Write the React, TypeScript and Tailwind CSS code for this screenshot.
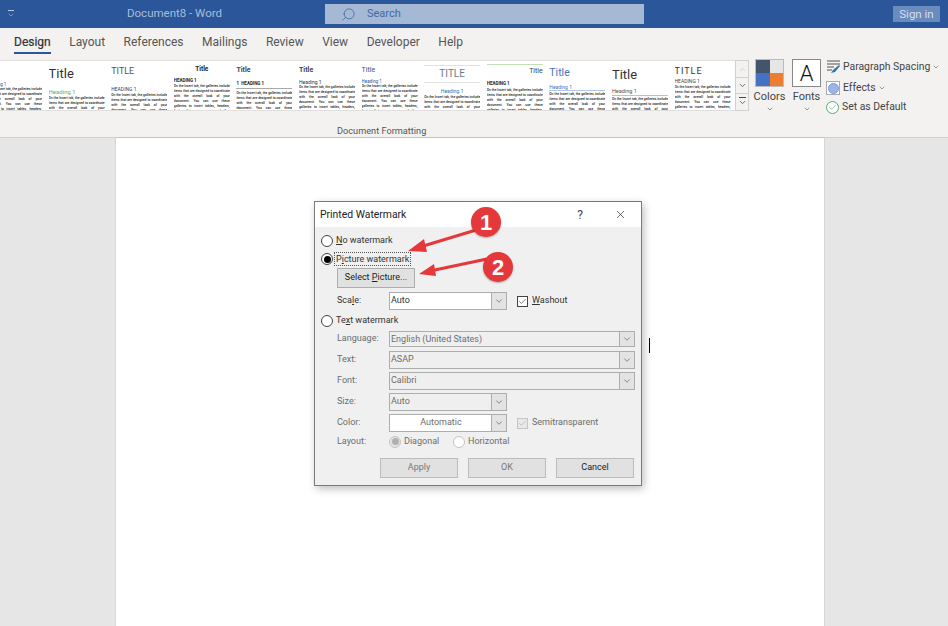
import { Check, ChevronDown, ChevronUp, Search, X } from "lucide-react";
import type { ReactNode } from "react";

const BODY =
  "On the Insert tab, the galleries include items that are designed to coordinate with the overall look of your document. You can use these galleries to insert tables, headers, footers, lists, cover pages, and other document building blocks.";

const themes = [
  { title: "", titleCls: "h-[21px]", head: "Heading 1", headCls: "text-[4.5px] leading-[5px] text-[#2f5496]", bodyCls: "" },
  { title: "Title", titleCls: "text-[13px] leading-[18px] mt-[4px] text-[#333]", head: "Heading 1", headCls: "text-[6px] leading-[7px] mt-[5px] text-[#70ad47]", bodyCls: "mt-[1px]" },
  { title: "TITLE", titleCls: "text-[9px] leading-[11px] mt-[5px] text-[#555]", head: "HEADING 1", headCls: "text-[5px] leading-[6px] mt-[9px] text-[#444]", bodyCls: "mt-[1px]" },
  { title: "Title", titleCls: "text-[6.5px] leading-[8px] mt-[4px] font-bold text-center text-[#222]", head: "HEADING 1", headCls: "text-[4.5px] leading-[5px] mt-[5px] font-bold text-[#222]", bodyCls: "mt-[1px]" },
  { title: "Title", titleCls: "text-[7px] leading-[8px] mt-[5px] font-bold text-[#444]", head: "1  HEADING 1", headCls: "text-[4.5px] leading-[6px] mt-[7px] pb-[1px] font-bold border-b border-[#aaa] text-[#222]", bodyCls: "mt-[2px]" },
  { title: "Title", titleCls: "text-[7px] leading-[8px] mt-[5px] font-bold text-[#444]", head: "Heading 1", headCls: "text-[5px] leading-[6px] mt-[5px] text-[#333]", bodyCls: "" },
  { title: "Title", titleCls: "text-[7px] leading-[8px] mt-[5px] text-[#2f5496]", head: "Heading 1", headCls: "text-[4.5px] leading-[5px] mt-[5px] text-[#2f5496]", bodyCls: "" },
  { title: "TITLE", titleCls: "text-[10px] leading-[16px] mt-[4px] text-center text-[#6b7a8f] border-y border-[#e3e3e3]", head: "Heading 1", headCls: "text-[5px] leading-[6px] mt-[5px] text-center text-[#2e74b5]", bodyCls: "mt-[1px]" },
  { title: "Title", titleCls: "text-[7px] leading-[8px] mt-[3px] pt-[2px] text-right border-t border-[#c5e0b4] text-[#444]", head: "HEADING 1", headCls: "text-[4.5px] leading-[5px] mt-[6px] font-bold text-[#222]", bodyCls: "mt-[2px]" },
  { title: "Title", titleCls: "text-[10.5px] leading-[13px] mt-[5px] text-[#4472c4]", head: "Heading 1", headCls: "text-[5px] leading-[6px] mt-[5px] border-b border-[#b4c6e7] text-[#4472c4]", bodyCls: "mt-[1px]" },
  { title: "Title", titleCls: "text-[13px] leading-[17px] mt-[5px] text-[#333]", head: "Heading 1", headCls: "text-[5.5px] leading-[7px] mt-[5px] border-b border-[#f4b183] text-[#555]", bodyCls: "mt-[1px]" },
  { title: "TITLE", titleCls: "text-[9px] leading-[11px] mt-[5px] tracking-[1px] text-[#333]", head: "HEADING 1", headCls: "text-[5px] leading-[6px] mt-[1px] text-[#444]", bodyCls: "mt-[1px]" },
];

function Radio({ on, dim, cls }: { on?: boolean; dim?: boolean; cls?: string }) {
  return (
    <span
      className={
        "flex h-[12px] w-[12px] shrink-0 items-center justify-center rounded-full border " +
        (dim ? "border-[#c4c4c4] " : "border-[#444] ") +
        (on && dim ? "bg-[#e4e4e4] " : "bg-white ") +
        (cls ?? "")
      }
    >
      {on && <span className={"h-[7px] w-[7px] rounded-full " + (dim ? "bg-[#b0b0b0]" : "bg-black")} />}
    </span>
  );
}

function Combo({ value, width, fill, center, h }: { value: string; width: string; fill: string; center?: boolean; h: string }) {
  return (
    <div className={"flex border border-[#adadad] " + width + " " + h + " " + fill}>
      <span className={"flex-1 pl-[1px] leading-[15px] " + (center ? "text-center" : "")}>{value}</span>
      <span className="flex w-[15px] items-center justify-center border-l border-[#adadad] bg-[#e3e3e3]">
        <ChevronDown size={10} strokeWidth={1.4} className="text-[#444]" />
      </span>
    </div>
  );
}

function FieldRow({ label, children, cls }: { label: ReactNode; children: ReactNode; cls: string }) {
  return (
    <div className={"ml-[16px] flex items-center " + cls}>
      <span className="w-[52px] text-[#6d6d6d]">{label}</span>
      {children}
    </div>
  );
}

function DialogButton({ label, dim }: { label: string; dim?: boolean }) {
  return (
    <button className={"h-[20px] w-[78px] border border-[#bcbcbc] bg-[#e1e1e1] " + (dim ? "text-[#777]" : "text-[#222]")}>
      {label}
    </button>
  );
}

function Dialog() {
  return (
    <div className="absolute left-[314px] top-[201px] h-[285px] w-[328px] border border-[#7a7a7a] bg-[#f0f0f0] text-[9px] text-[#333] shadow-[2px_3px_8px_rgba(0,0,0,0.25)]">
      <div className="flex h-[25px] items-center bg-white pl-[5px]">
        <span className="flex-1 text-[10.4px] text-[#222]">Printed Watermark</span>
        <span className="mr-[31px] text-[12px] text-[#444]">?</span>
        <X size={13} strokeWidth={1.2} className="mr-[14px] text-[#222]" />
      </div>
      <div className="px-[6px]">
        <div className="mt-[7px] flex h-[14px] items-center gap-[3px]">
          <Radio />
          <span>
            <u>N</u>o watermark
          </span>
        </div>
        <div className="mt-[4px] flex h-[14px] items-center gap-[1px]">
          <Radio on />
          <span className="border border-dotted border-[#555] px-[1px] leading-[12px]">
            P<u>i</u>cture watermark
          </span>
        </div>
        <button className="ml-[16px] mt-[2px] block h-[20px] w-[78px] border border-[#adadad] bg-[#e1e1e1] text-[#222]">
          Select <u>P</u>icture...
        </button>
        <FieldRow label={<span className="text-[#333]">Sca<u>l</u>e:</span>} cls="mt-[4px]">
          <Combo value="Auto" width="w-[118px]" h="h-[18px]" fill="bg-white text-[#333]" />
          <span className="ml-[10px] flex h-[11px] w-[11px] items-center justify-center border border-[#444] bg-white">
            <Check size={9} strokeWidth={1.5} className="text-[#222]" />
          </span>
          <span className="ml-[4px]">
            <u>W</u>ashout
          </span>
        </FieldRow>
        <div className="mt-[4px] flex h-[14px] items-center gap-[3px]">
          <Radio />
          <span>
            Te<u>x</u>t watermark
          </span>
        </div>
        <FieldRow label="Language:" cls="mt-[3px]">
          <Combo value="English (United States)" width="w-[246px]" h="h-[16px]" fill="bg-[#efefef] text-[#6d6d6d]" />
        </FieldRow>
        <FieldRow label="Text:" cls="mt-[4px]">
          <Combo value="ASAP" width="w-[246px]" h="h-[18px]" fill="bg-[#efefef] text-[#6d6d6d]" />
        </FieldRow>
        <FieldRow label="Font:" cls="mt-[3px]">
          <Combo value="Calibri" width="w-[246px]" h="h-[18px]" fill="bg-[#efefef] text-[#6d6d6d]" />
        </FieldRow>
        <FieldRow label="Size:" cls="mt-[3px]">
          <Combo value="Auto" width="w-[118px]" h="h-[18px]" fill="bg-[#efefef] text-[#6d6d6d]" />
        </FieldRow>
        <FieldRow label="Color:" cls="mt-[3px]">
          <Combo value="Automatic" width="w-[118px]" h="h-[18px]" center fill="bg-white text-[#6d6d6d]" />
          <span className="ml-[10px] flex h-[11px] w-[11px] items-center justify-center border border-[#c4c4c4] bg-[#e8e8e8]">
            <Check size={9} strokeWidth={1.3} className="text-[#9a9a9a]" />
          </span>
          <span className="ml-[4px] text-[#6d6d6d]">Semitransparent</span>
        </FieldRow>
        <FieldRow label="Layout:" cls="mt-[3px]">
          <Radio on dim />
          <span className="ml-[3px] w-[49px] text-[#6d6d6d]">Diagonal</span>
          <Radio dim />
          <span className="ml-[3px] text-[#6d6d6d]">Horizontal</span>
        </FieldRow>
        <div className="mt-[9px] flex justify-end gap-[10px] pr-[1px]">
          <DialogButton label="Apply" dim />
          <DialogButton label="OK" dim />
          <DialogButton label="Cancel" />
        </div>
      </div>
    </div>
  );
}

function Callouts() {
  return (
    <>
      <svg className="absolute left-0 top-0 h-[626px] w-[948px]" viewBox="0 0 948 626">
        <path d="M476 230 L420 247" stroke="#e5383b" strokeWidth="3" fill="none" />
        <path d="M408 251 L424 239 L427 252 Z" fill="#e5383b" />
        <path d="M487 259 L430 271" stroke="#e5383b" strokeWidth="3" fill="none" />
        <path d="M419 274 L434 264 L436 276 Z" fill="#e5383b" />
      </svg>
      <span className="absolute left-[471px] top-[207px] flex h-[30px] w-[30px] items-center justify-center rounded-full bg-[#e5383b] text-[22px] font-bold text-white shadow-[0_1px_2px_rgba(0,0,0,0.3)] [font-family:'Liberation_Sans',sans-serif]">
        1
      </span>
      <span className="absolute left-[483px] top-[252px] flex h-[30px] w-[30px] items-center justify-center rounded-full bg-[#e5383b] text-[22px] font-bold text-white shadow-[0_1px_2px_rgba(0,0,0,0.3)] [font-family:'Liberation_Sans',sans-serif]">
        2
      </span>
    </>
  );
}

export default function App() {
  return (
    <div className="relative flex h-[626px] w-[948px] flex-col overflow-hidden bg-[#e6e6e6] [font-family:Roboto,sans-serif]">
      <header className="flex h-[28px] items-center bg-[#2b579a]">
        <div className="ml-[7px] flex w-[8px] flex-col items-center">
          <span className="h-[1px] w-[6px] bg-[#b8c8e0]" />
          <ChevronDown size={8} strokeWidth={1.6} className="text-[#b8c8e0]" />
        </div>
        <span className="ml-[112px] w-[198px] text-[11.5px] text-[#a9bcd9]">Document8&nbsp;-&nbsp;Word</span>
        <div className="flex h-[20px] w-[319px] items-center bg-[#a5b9d4] pl-[16px] text-[#3f6aa6]">
          <Search size={15} strokeWidth={1.3} className="-scale-x-100" />
          <span className="ml-[11px] text-[11px]">Search</span>
        </div>
        <button className="ml-[249px] h-[16px] w-[47px] bg-[#6a8bbd] text-[11.5px] leading-[16px] text-[#d5dfee]">Sign in</button>
      </header>

      <section className="h-[110px] border-b border-[#d2d0ce] bg-[#f3f2f1]">
        <nav className="flex h-[32px] items-start gap-[18.5px] pl-[14px] pt-[5px] text-[12px] text-[#555]">
          <span className="relative text-[#333] [-webkit-text-stroke:0.2px_#333]">
            Design
            <span className="absolute -bottom-[3px] left-0 h-[2px] w-full bg-[#2b579a]" />
          </span>
          <span>Layout</span>
          <span>References</span>
          <span>Mailings</span>
          <span>Review</span>
          <span>View</span>
          <span>Developer</span>
          <span>Help</span>
        </nav>
        <div className="flex h-[51px]">
          <div className="flex w-[735px] gap-[6.6px] overflow-hidden border-y border-[#e1dfdd] bg-white">
            {themes.map((t, i) => (
              <div key={i} className={"flex h-[49px] w-[56px] shrink-0 flex-col overflow-hidden " + (i === 0 ? "-ml-[14px]" : "")}>
                {t.title ? <div className={"shrink-0 " + t.titleCls}>{t.title}</div> : <div className={"shrink-0 " + t.titleCls} />}
                <div className={"shrink-0 whitespace-pre " + t.headCls}>{t.head}</div>
                <p className={"min-h-0 flex-1 overflow-hidden text-justify text-[3.3px] font-medium leading-[5px] text-[#222] " + t.bodyCls}>{BODY}</p>
              </div>
            ))}
          </div>
          <div className="flex w-[14px] flex-col border border-[#d2d0ce] text-[#444]">
            <span className="flex h-[16px] items-center justify-center text-[#c4c4c4]">
              <ChevronUp size={9} strokeWidth={1.8} />
            </span>
            <span className="flex h-[17px] items-center justify-center border-y border-[#d2d0ce]">
              <ChevronDown size={9} strokeWidth={2} />
            </span>
            <span className="flex flex-1 flex-col items-center justify-center">
              <span className="h-[1px] w-[7px] bg-[#444]" />
              <ChevronDown size={9} strokeWidth={2} />
            </span>
          </div>
          <div className="ml-[6px] -mt-[1px] flex w-[29px] flex-col items-center">
            <div className="grid h-[28px] w-[29px] shrink-0 grid-cols-2 grid-rows-2 border border-[#bbb]">
              <span className="bg-[#44546a]" />
              <span className="bg-[#e7e6e6]" />
              <span className="bg-[#4472c4]" />
              <span className="bg-[#ed7d31]" />
            </div>
            <span className="mt-[3px] text-[11px] leading-[14px] text-[#444]">Colors</span>
            <ChevronDown size={8} strokeWidth={1.6} className="mt-[1px] shrink-0 text-[#444]" />
          </div>
          <div className="ml-[8px] -mt-[1px] flex w-[29px] flex-col items-center">
            <div className="flex h-[28px] w-[29px] shrink-0 items-center justify-center border border-[#888] bg-white text-[22px] font-light text-[#111]">A</div>
            <span className="mt-[3px] text-[11px] leading-[14px] text-[#444]">Fonts</span>
            <ChevronDown size={8} strokeWidth={1.6} className="mt-[1px] shrink-0 text-[#444]" />
          </div>
          <div className="ml-[5px] flex flex-col gap-[6px] text-[10.4px] leading-[14px] text-[#444]">
            <div className="flex h-[14px] items-center gap-[2px]">
              <svg width="15" height="14" viewBox="0 0 15 14" className="shrink-0">
                <path d="M1 1h13M1 4h13M1 7h7M1 10h5" stroke="#555" strokeWidth="1" />
                <path d="M5 13 L7 10 L13 5 L14 6 L9 12 Z" fill="#2e75b6" />
              </svg>
              <span>Paragraph Spacing</span>
              <ChevronDown size={8} strokeWidth={1.6} />
            </div>
            <div className="mt-[1px] flex h-[14px] items-center gap-[2px]">
              <span className="flex h-[14px] w-[14px] items-center justify-center border border-[#aaa] bg-white">
                <span className="h-[11px] w-[11px] rounded-full border border-[#7c9bd9] bg-[#9db5e6]" />
              </span>
              <span className="ml-[1px]">Effects</span>
              <ChevronDown size={8} strokeWidth={1.6} />
            </div>
            <div className="-mt-[1px] flex h-[14px] items-center gap-[3px]">
              <span className="flex h-[13px] w-[13px] items-center justify-center rounded-full border border-[#4caf6a] bg-white">
                <Check size={9} strokeWidth={1.6} className="text-[#4caf6a]" />
              </span>
              <span>Set as Default</span>
            </div>
          </div>
        </div>
        <div className="pl-[337px] pt-[13px] text-[9.2px] leading-[14px] text-[#555]">Document Formatting</div>
      </section>

      <main className="flex flex-1 pl-[116px]">
        <div className="w-[708px] bg-white shadow-[0_0_1px_rgba(0,0,0,0.4)]" />
      </main>

      <span className="absolute left-[649px] top-[338px] h-[15px] w-[1px] bg-black" />
      <Dialog />
      <Callouts />
    </div>
  );
}
